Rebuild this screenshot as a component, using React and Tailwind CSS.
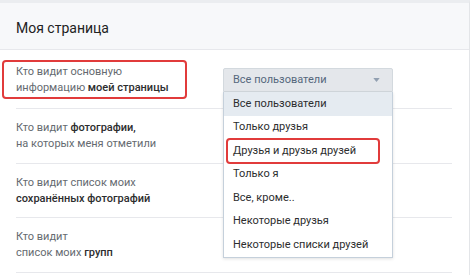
import React from 'react';

const options = [
    'Все пользователи',
    'Только друзья',
    'Друзья и друзья друзей',
    'Только я',
    'Все, кроме..',
    'Некоторые друзья',
    'Некоторые списки друзей',
];

const rows = [
    { first: ['Кто видит ', 'фотографии,'], second: ['на которых меня отметили', ''] },
    { first: ['Кто видит список моих', ''], second: ['', 'сохранённых фотографий'] },
    { first: ['Кто видит', ''], second: ['список моих ', 'групп'] },
];

const Line = ({ parts }) => (
    <div>
        {parts[0]}
        {parts[1] && <span className="font-medium text-[#2c2d2e]">{parts[1]}</span>}
    </div>
);

const Dropdown = () => (
    <div className="relative w-[170px]">
        {/* closed select */}
        <div className="h-6 bg-[#e4e7eb] border border-[#d3d9de] rounded-t-[2px] flex items-center justify-between pl-[9px] pr-3 text-[#55677d]">
            <span>Все пользователи</span>
            <svg width="7" height="4" viewBox="0 0 8 5">
                <path d="M0 0h8L4 5z" fill="#92a0b1" />
            </svg>
        </div>
        {/* opened list */}
        <div className="absolute left-0 top-6 w-full bg-white border border-[#c5d0db] border-t-0 shadow-[0_1px_3px_rgba(0,0,0,0.12)] z-10">
            {options.map((o, i) => (
                <div
                    key={o}
                    className={`relative h-[23.5px] flex items-center pl-[9px] text-[#2c2d2e] ${i === 0 ? 'bg-[#e5ebf1]' : ''}`}
                >
                    {o}
                    {i === 2 && (
                        <div className="absolute left-[2px] right-[12px] -top-[1px] -bottom-[1px] border-2 border-[#e13b3b] rounded-[4px]" />
                    )}
                </div>
            ))}
        </div>
    </div>
);

export default function App() {
    return (
        <div className="w-[474px] h-[275px] bg-white overflow-hidden font-['Roboto',sans-serif] text-[11px] leading-[16px] text-[#656a70]">
            <div className="w-[470px] h-full border-r border-[#e3e5e8] border-t-[3px] border-t-[#ebedf0]">
                <header className="h-[47px] bg-[#f7f8fa] border-b border-[#e7e8ec] flex items-center px-4 pt-[3px] text-[14px] text-[#222]">
                    Моя страница
                </header>

                <div className="mx-4 w-[436px] pt-[14px] pb-[12px] border-b border-[#e7e8ec] flex">
                    <div className="relative w-[207px]">
                        <div className="absolute -left-[14px] -top-[4px] right-[36px] -bottom-[3px] border-2 border-[#e13b3b] rounded-[4px]" />
                        <div>Кто видит основную</div>
                        <div>
                            информацию <span className="font-medium text-[#2c2d2e]">моей страницы</span>
                        </div>
                    </div>
                    <div className="mt-[4px]">
                        <Dropdown />
                    </div>
                </div>

                {rows.map((r, i) => (
                    <div key={i} className="mx-4 w-[436px] pt-[11px] pb-[10.5px] border-b border-[#e7e8ec]">
                        <Line parts={r.first} />
                        <Line parts={r.second} />
                    </div>
                ))}
            </div>
        </div>
    );
}
